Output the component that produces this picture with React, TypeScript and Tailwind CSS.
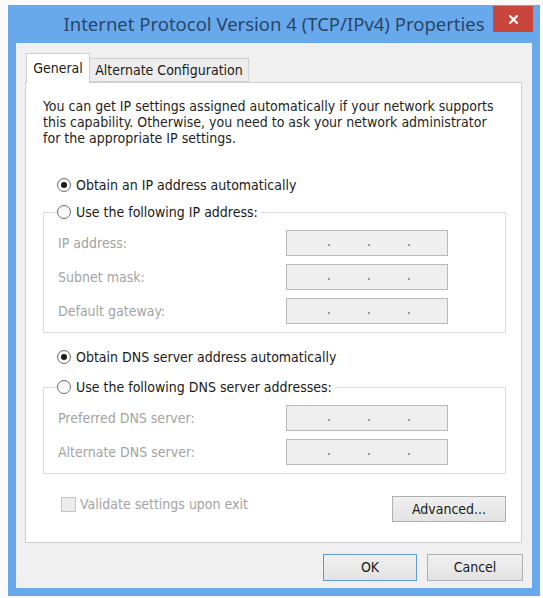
import React from "react";

const uiFont =
  "font-['DejaVu_Sans_Condensed','DejaVu_Sans',sans-serif] font-stretch-condensed";

function Radio({ checked }: { checked?: boolean }) {
  return (
    <span className="w-[14px] h-[14px] shrink-0 rounded-full border border-[#6b6b6b] bg-gradient-to-b from-[#f4f4f4] to-white flex items-center justify-center">
      {checked && <span className="w-[6px] h-[6px] rounded-full bg-[#1c1c1c]" />}
    </span>
  );
}

function IpField() {
  return (
    <div className="w-[162px] h-[26px] border border-[#b9b9b9] bg-[#efefef] flex items-center pl-[41px] gap-[38px] pt-[3px]">
      <span className="w-[2px] h-[2px] bg-[#9a9a9a]" />
      <span className="w-[2px] h-[2px] bg-[#9a9a9a]" />
      <span className="w-[2px] h-[2px] bg-[#9a9a9a]" />
    </div>
  );
}

function FieldRow({ label }: { label: string }) {
  return (
    <div className="flex items-center h-[26px]">
      <span className="w-[228px] text-[#a3a3a3]">{label}</span>
      <IpField />
    </div>
  );
}

function Group({ title, rows }: { title: string; rows: string[] }) {
  return (
    <fieldset className="border border-[#dcdcdc] px-[14px] pt-[9px] pb-[8px] flex flex-col gap-[8px]">
      <legend className="h-[18px] flex items-center gap-[5px] pr-[3px] -ml-px">
        <Radio />
        <span className="text-[#1a1a1a]">{title}</span>
      </legend>
      {rows.map((r) => (
        <FieldRow key={r} label={r} />
      ))}
    </fieldset>
  );
}

function OptionRow({ label, checked }: { label: string; checked?: boolean }) {
  return (
    <div className="h-[18px] flex items-center gap-[5px] pl-[14px]">
      <Radio checked={checked} />
      <span className="text-[#1a1a1a]">{label}</span>
    </div>
  );
}

export default function App() {
  return (
    <div className="w-[543px] h-[598px] bg-[#fafafa] pl-[8px] pt-[5px]">
      <div className="w-[532px] h-[591px] bg-[#68a9ec] flex flex-col">
        {/* caption bar */}
        <div className="h-[38px] flex items-start">
          <div className="w-[47px]" />
          <div className="flex-1 h-[37px] flex items-center justify-center font-['Noto_Sans',sans-serif] text-[18.5px] text-[#2a4568]">
            Internet Protocol Version 4 (TCP/IPv4) Properties
          </div>
          <div className="w-[40px] h-[26px] mt-[1px] mr-[7px] bg-[#c9463d] flex items-center justify-center">
            <svg width="9" height="9" viewBox="0 0 9 9">
              <path d="M1.2 1.2 L7.8 7.8 M7.8 1.2 L1.2 7.8" stroke="#ffffff" strokeWidth="2.2" strokeLinecap="square" />
            </svg>
          </div>
        </div>

        {/* client area */}
        <div className={`mx-[8px] mb-[8px] h-[545px] bg-[#f0f0f0] px-[9px] pt-[10px] flex flex-col text-[14px] ${uiFont}`}>
          <div className="flex items-end h-[29px] pl-[1px]">
            <div className="relative z-10 -mb-px h-[30px] w-[64px] bg-white border border-b-0 border-[#d0d0d0] flex items-center justify-center text-[#1a1a1a]">
              General
            </div>
            <div className="h-[24px] w-[159px] bg-[#ededed] border border-l-0 border-[#d0d0d0] flex items-center justify-center text-[#1a1a1a]">
              Alternate Configuration
            </div>
          </div>

          <div className="h-[461px] w-[497px] bg-white border border-[#d0d0d0] pt-[15px] pl-[17px] pr-[15px] flex flex-col">
            <p className="leading-[16px] text-[#1f1f1f]">
              You can get IP settings assigned automatically if your network supports
              <br />
              this capability. Otherwise, you need to ask your network administrator
              <br />
              for the appropriate IP settings.
            </p>

            <div className="mt-[30px]">
              <OptionRow label="Obtain an IP address automatically" checked />
            </div>
            <div className="mt-[9px]">
              <Group title="Use the following IP address:" rows={["IP address:", "Subnet mask:", "Default gateway:"]} />
            </div>

            <div className="mt-[15px]">
              <OptionRow label="Obtain DNS server address automatically" checked />
            </div>
            <div className="mt-[12px]">
              <Group title="Use the following DNS server addresses:" rows={["Preferred DNS server:", "Alternate DNS server:"]} />
            </div>

            <div className="mt-[22px] flex items-start justify-between">
              <div className="flex items-center gap-[4px] pl-[18px] h-[16px]">
                <span className="w-[15px] h-[15px] border border-[#c4c4c4] bg-[#ececec]" />
                <span className="text-[#a3a3a3]">Validate settings upon exit</span>
              </div>
              <button className="w-[114px] h-[26px] border border-[#b0b0b0] bg-gradient-to-b from-[#f0f0f0] to-[#e3e3e3] text-[#1a1a1a]">
                Advanced...
              </button>
            </div>
          </div>

          <div className="mt-[11px] flex justify-end gap-[10px]">
            <button className="w-[94px] h-[27px] border border-[#5e9ad3] bg-gradient-to-b from-[#f0f0f0] to-[#e3e3e3] text-[#1a1a1a]">
              OK
            </button>
            <button className="w-[96px] h-[27px] border border-[#b0b0b0] bg-gradient-to-b from-[#f0f0f0] to-[#e3e3e3] text-[#1a1a1a]">
              Cancel
            </button>
          </div>
        </div>
      </div>
    </div>
  );
}
